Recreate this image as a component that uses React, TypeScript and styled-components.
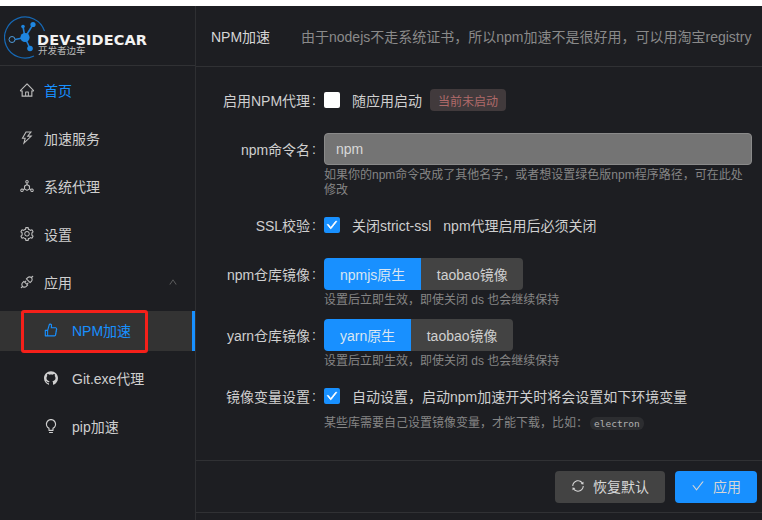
import React from "react";
import styled, { createGlobalStyle } from "styled-components";
import {
  AiOutlineApi,
  AiOutlineBulb,
  AiOutlineCheck,
  AiOutlineDeploymentUnit,
  AiOutlineGithub,
  AiOutlineHome,
  AiOutlineLike,
  AiOutlineSetting,
  AiOutlineSync,
  AiOutlineThunderbolt,
  AiOutlineUp,
} from "react-icons/ai";

const GlobalStyle = createGlobalStyle`
  html, body {
    margin: 0;
    padding: 0;
    background: #fff;
    overflow: hidden;
  }
  body {
    font-family: "Liberation Sans", "Noto Sans CJK SC", sans-serif;
    font-size: 14px;
    color: #d0d0d0;
  }
`;

const App: React.FC = () => {
  return (
    <>
      <GlobalStyle />
      <Page>
        <Sidebar>
          <LogoBar>
            <LogoMark />
            <LogoText>
              <LogoTitle>DEV-SIDECAR</LogoTitle>
              <LogoSub>开发者边车</LogoSub>
            </LogoText>
          </LogoBar>
          <Menu>
            <MenuItem $active>
              <MenuIcon><AiOutlineHome /></MenuIcon>首页
            </MenuItem>
            <MenuItem>
              <MenuIcon><AiOutlineThunderbolt /></MenuIcon>加速服务
            </MenuItem>
            <MenuItem>
              <MenuIcon><AiOutlineDeploymentUnit /></MenuIcon>系统代理
            </MenuItem>
            <MenuItem>
              <MenuIcon><AiOutlineSetting /></MenuIcon>设置
            </MenuItem>
            <MenuItem>
              <MenuIcon><AiOutlineApi /></MenuIcon>应用
              <Caret><AiOutlineUp /></Caret>
            </MenuItem>
            <SubItem $active $selected>
              <MenuIcon><AiOutlineLike /></MenuIcon>NPM加速
              <RedMark />
            </SubItem>
            <SubItem>
              <MenuIcon><AiOutlineGithub /></MenuIcon>Git.exe代理
            </SubItem>
            <SubItem>
              <MenuIcon><AiOutlineBulb /></MenuIcon>pip加速
            </SubItem>
          </Menu>
        </Sidebar>

        <Main>
          <Header>
            <HeaderTitle>NPM加速</HeaderTitle>
            <HeaderDesc>由于nodejs不走系统证书，所以npm加速不是很好用，可以用淘宝registry</HeaderDesc>
          </Header>

          <Body>
            <Row $gap={17}>
              <Label>启用NPM代理<Colon>:</Colon></Label>
              <Control>
                <CheckLine>
                  <CheckBox />
                  <CheckText>随应用启动</CheckText>
                  <StatusTag>当前未启动</StatusTag>
                </CheckLine>
              </Control>
            </Row>

            <Row $gap={11}>
              <Label>npm命令名<Colon>:</Colon></Label>
              <Control>
                <TextInput readOnly value="npm" />
                <Help>如果你的npm命令改成了其他名字，或者想设置绿色版npm程序路径，可在此处修改</Help>
              </Control>
            </Row>

            <Row $gap={17}>
              <Label>SSL校验<Colon>:</Colon></Label>
              <Control>
                <CheckLine>
                  <CheckBox $checked><AiOutlineCheck /></CheckBox>
                  <CheckText>关闭strict-ssl</CheckText>
                  <CheckNote>npm代理启用后必须关闭</CheckNote>
                </CheckLine>
              </Control>
            </Row>

            <Row $gap={11}>
              <Label>npm仓库镜像<Colon>:</Colon></Label>
              <Control>
                <RadioGroup>
                  <RadioButton $on>npmjs原生</RadioButton>
                  <RadioButton>taobao镜像</RadioButton>
                </RadioGroup>
                <Help>设置后立即生效，即使关闭 ds 也会继续保持</Help>
              </Control>
            </Row>

            <Row $gap={11}>
              <Label>yarn仓库镜像<Colon>:</Colon></Label>
              <Control>
                <RadioGroup>
                  <RadioButton $on>yarn原生</RadioButton>
                  <RadioButton>taobao镜像</RadioButton>
                </RadioGroup>
                <Help>设置后立即生效，即使关闭 ds 也会继续保持</Help>
              </Control>
            </Row>

            <Row $gap={0}>
              <Label>镜像变量设置<Colon>:</Colon></Label>
              <Control>
                <CheckLine>
                  <CheckBox $checked><AiOutlineCheck /></CheckBox>
                  <CheckText>自动设置，启动npm加速开关时将会设置如下环境变量</CheckText>
                </CheckLine>
                <HelpSpaced>
                  某些库需要自己设置镜像变量，才能下载，比如：<Code>electron</Code>
                </HelpSpaced>
              </Control>
            </Row>
          </Body>

          <Footer>
            <FooterButton>
              <AiOutlineSync />恢复默认
            </FooterButton>
            <FooterButton $primary>
              <AiOutlineCheck />应用
            </FooterButton>
          </Footer>
        </Main>
      </Page>
    </>
  );
};

const LogoMark: React.FC = () => (
  <LogoSvg width="44" height="44" viewBox="0 0 44 44">
    <path d="M40.5 16 A20.5 20.5 0 1 0 30 41" fill="none" stroke="#1668b4" strokeWidth="1.2" />
    <g stroke="#1f7fd6" strokeWidth="1.6">
      <line x1="11" y1="24.5" x2="21" y2="22.5" />
      <line x1="21" y1="22.5" x2="29" y2="9.5" />
      <line x1="21" y1="22.5" x2="19" y2="11.5" />
      <line x1="21" y1="22.5" x2="26" y2="33.5" />
    </g>
    <circle cx="8" cy="24.5" r="3" fill="#1d1e22" stroke="#4f9ad8" strokeWidth="1" />
    <circle cx="21" cy="22.5" r="4.6" fill="#1f86e0" />
    <circle cx="29" cy="9.5" r="2.6" fill="#1f86e0" />
    <circle cx="19" cy="11.5" r="1.8" fill="#1f86e0" />
    <circle cx="26" cy="33.5" r="2.8" fill="#1f86e0" />
  </LogoSvg>
);

export default App;

const Page = styled.div`
  width: 762px;
  height: 514px;
  margin-top: 6px;
  background: #1d1e22;
  display: grid;
  grid-template-columns: 196px 1fr;
  overflow: hidden;
`;

const Sidebar = styled.aside`
  border-right: 1px solid #2e2f32;
  display: flex;
  flex-direction: column;
`;

const LogoBar = styled.div`
  height: 60px;
  box-sizing: border-box;
  border-bottom: 1px solid #303134;
  padding-left: 4px;
  display: flex;
  align-items: center;
  position: relative;
`;

const LogoSvg = styled.svg`
  flex: none;
  margin-top: 3px;
`;

const LogoText = styled.div`
  margin-left: -11px;
  margin-top: 17px;
  display: flex;
  flex-direction: column;
`;

const LogoTitle = styled.div`
  font-family: "DejaVu Sans", sans-serif;
  font-size: 14.5px;
  line-height: 12px;
  font-weight: 700;
  letter-spacing: 0.1px;
  color: #f2f2f2;
`;

const LogoSub = styled.div`
  font-family: "Noto Sans CJK SC", sans-serif;
  font-size: 9.5px;
  line-height: 9px;
  color: #b9b9b9;
  margin-left: 1px;
`;

const Menu = styled.nav`
  padding-top: 5px;
  display: flex;
  flex-direction: column;
  gap: 8px;
`;

const MenuItem = styled.div<{ $active?: boolean }>`
  height: 40px;
  box-sizing: border-box;
  padding-left: 20px;
  padding-bottom: 2px;
  display: flex;
  align-items: center;
  position: relative;
  color: ${(props) => (props.$active ? "#1890ff" : "#cfcfcf")};
  & > span:first-child {
    color: #bdbdbd;
  }
`;

const SubItem = styled(MenuItem)<{ $selected?: boolean }>`
  padding-left: 44px;
  background: ${(props) => (props.$selected ? "#333333" : "transparent")};
  border-right: 3px solid ${(props) => (props.$selected ? "#1890ff" : "transparent")};
  & > span:first-child {
    color: ${(props) => (props.$selected ? "#1890ff" : "#cfcfcf")};
  }
`;

const MenuIcon = styled.span`
  width: 14px;
  height: 14px;
  margin-right: 10px;
  font-size: 16px;
  display: inline-flex;
  align-items: center;
  justify-content: center;
  svg {
    flex: none;
  }
  ${SubItem} & {
    margin-right: 14px;
  }
`;

const Caret = styled.span`
  position: absolute;
  right: 17px;
  top: 14px;
  font-size: 10px;
  line-height: 10px;
  color: #6a6a6a;
`;

const RedMark = styled.span`
  position: absolute;
  left: 21px;
  top: -1px;
  width: 127px;
  height: 43px;
  box-sizing: border-box;
  border: 3px solid #f5201a;
  border-radius: 3px;
`;

const Main = styled.main`
  display: flex;
  flex-direction: column;
  min-width: 0;
`;

const Header = styled.header`
  height: 61px;
  flex: none;
  box-sizing: border-box;
  border-bottom: 1px solid #303134;
  padding-left: 15px;
  display: flex;
  align-items: center;
  white-space: nowrap;
  overflow: hidden;
`;

const HeaderTitle = styled.div`
  color: #d6d6d6;
  width: 91px;
  flex: none;
  margin-right: -1px;
`;

const HeaderDesc = styled.div`
  color: #8a8a8a;
`;

const Body = styled.div`
  height: 393px;
  flex: none;
  box-sizing: border-box;
  padding: 17px 10px 0 0;
`;

const Row = styled.div<{ $gap: number }>`
  display: grid;
  grid-template-columns: 128px 1fr;
  margin-bottom: ${(props) => props.$gap}px;
`;

const Label = styled.label`
  height: 32px;
  padding-right: 8px;
  display: flex;
  align-items: center;
  justify-content: flex-end;
  color: #cfcfcf;
  white-space: nowrap;
`;

const Colon = styled.span`
  margin-left: 2px;
`;

const Control = styled.div`
  min-width: 0;
`;

const CheckLine = styled.div`
  height: 32px;
  display: flex;
  align-items: center;
`;

const CheckBox = styled.span<{ $checked?: boolean }>`
  width: 16px;
  height: 16px;
  border-radius: 2px;
  background: ${(props) => (props.$checked ? "#1890ff" : "#ffffff")};
  color: #fff;
  font-size: 12px;
  display: inline-flex;
  align-items: center;
  justify-content: center;
  flex: none;
  svg {
    stroke: currentColor;
    stroke-width: 70;
  }
`;

const CheckText = styled.span`
  margin-left: 12px;
  color: #cfcfcf;
`;

const CheckNote = styled.span`
  margin-left: 12px;
  color: #cfcfcf;
`;

const StatusTag = styled.span`
  margin-left: 8px;
  height: 22px;
  padding: 0 8px;
  box-sizing: border-box;
  border-radius: 4px;
  background: #413a3c;
  color: #b06a6a;
  font-size: 12px;
  display: inline-flex;
  align-items: center;
`;

const TextInput = styled.input`
  display: block;
  width: 100%;
  height: 32px;
  box-sizing: border-box;
  padding: 0 11px;
  border: 1px solid #8a8a8a;
  border-radius: 4px;
  background: #747474;
  color: #d8d8d8;
  font: inherit;
  outline: none;
`;

const Help = styled.div`
  margin-top: 3px;
  font-size: 12px;
  line-height: 15px;
  color: #858585;
`;

const HelpSpaced = styled(Help)`
  line-height: 17px;
`;

const Code = styled.code`
  font-family: "DejaVu Sans Mono", "Liberation Mono", monospace;
  font-size: 9.5px;
  padding: 1px 4px;
  margin-left: 2px;
  border-radius: 6px;
  background: #2c2d30;
  color: #b0b0b0;
`;

const RadioGroup = styled.div`
  display: inline-flex;
  height: 32px;
  border-radius: 4px;
  overflow: hidden;
  vertical-align: top;
`;

const RadioButton = styled.span<{ $on?: boolean }>`
  padding: 0 ${(props) => (props.$on ? "16px" : "15.5px")};
  display: flex;
  align-items: center;
  background: ${(props) => (props.$on ? "#1890ff" : "#434343")};
  color: ${(props) => (props.$on ? "#d9e6f2" : "#d0d0d0")};
`;

const Footer = styled.footer`
  height: 53px;
  flex: none;
  box-sizing: border-box;
  border-top: 1px solid #303134;
  border-bottom: 1px solid #303134;
  padding-right: 5px;
  display: flex;
  align-items: center;
  justify-content: flex-end;
  gap: 10px;
`;

const FooterButton = styled.button<{ $primary?: boolean }>`
  height: 32px;
  padding: 0 16px 2px;
  border: none;
  border-radius: 4px;
  background: ${(props) => (props.$primary ? "#1890ff" : "#434343")};
  color: #d6d6d6;
  font: inherit;
  display: inline-flex;
  align-items: center;
  gap: 8px;
  svg {
    font-size: 14px;
  }
`;
